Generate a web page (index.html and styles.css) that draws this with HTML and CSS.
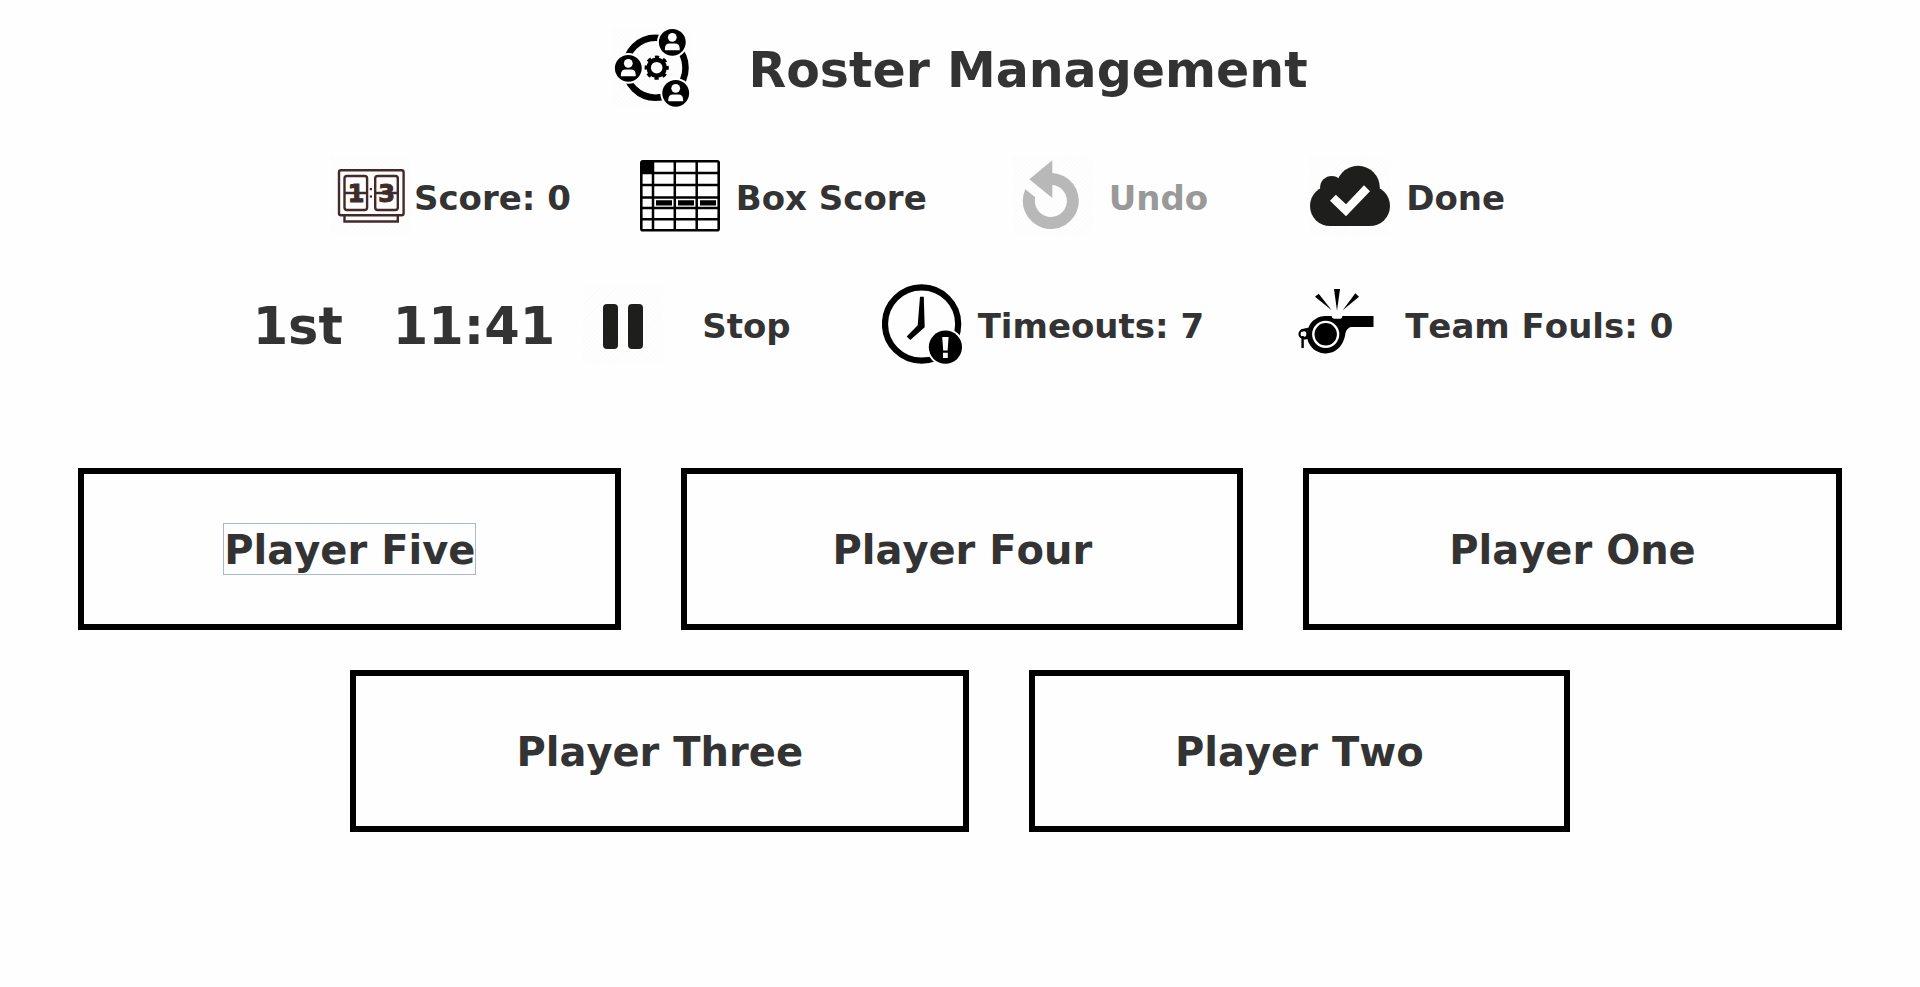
FILE: index.html
```html
<!DOCTYPE html>
<html lang="en">
<head>
<meta charset="utf-8">
<title>Roster Management</title>
<link rel="stylesheet" href="styles.css">
</head>
<body>
<main class="page">
  <header class="controls">
    <h1 class="row heading">
      <svg class="icon hatched" viewBox="0 0 80 80" aria-hidden="true">
        <circle cx="43.5" cy="39.7" r="30" fill="none" stroke="#000" stroke-width="6.5"/>
        <g fill="none" stroke="#000">
          <circle cx="44.7" cy="39.7" r="8" stroke-width="4.4"/>
          <circle cx="44.7" cy="39.7" r="10.6" stroke-width="3" stroke-dasharray="4.2 4.125" stroke-dashoffset="2.1"/>
        </g>
        <g id="member" transform="translate(60.3 14.3)">
          <circle r="15.4" fill="#fff"/><circle r="13.4"/>
          <circle cy="-5" r="4.4" fill="#fff"/>
          <path d="M-7.4 8V6.5Q-7.4 1.2-2.6 1.2H2.6Q7.4 1.2 7.4 6.5V8Z" fill="#fff"/>
        </g>
        <use href="#member" x="-44" y="26"/>
        <use href="#member" x="3.4" y="51"/>
      </svg>
      <span>Roster Management</span>
    </h1>

    <div class="row actions">
      <button class="action tight" type="button">
        <svg class="icon hatched" viewBox="0 0 80 80" aria-hidden="true">
          <g fill="none" stroke="#432a2a" stroke-width="2.4">
            <rect x="8" y="14.3" width="64.6" height="45" rx="2"/>
            <rect x="13.5" y="20" width="22.6" height="34" rx="2.5"/>
            <rect x="44.2" y="20" width="22.6" height="34" rx="2.5"/>
            <path d="M13.5 60v5.5h53.3V60M13.5 37h22.6M44.2 37h22.6"/>
          </g>
          <g fill="#432a2a">
            <rect x="38.8" y="32" width="2.2" height="2.2"/><rect x="38.8" y="39.4" width="2.2" height="2.2"/>
            <text class="digit" x="25" y="46" text-anchor="middle">1</text>
            <text class="digit" x="55.5" y="46" text-anchor="middle">3</text>
          </g>
        </svg>
        <span>Score: 0</span>
      </button>
      <button class="action box-score" type="button">
        <svg class="icon" viewBox="0 0 80 80" aria-hidden="true">
          <rect x="1.3" y="5.3" width="77.4" height="69" rx="1.5" fill="#fff" stroke="#000" stroke-width="2.6"/>
          <path d="M1 5h13v13H1z"/>
          <path d="M13 5v69M34.8 5v69M56.7 5v69M1 17h78M1 29h78M1 41.5h78M1 52h78M1 63.3h78" fill="none" stroke="#000" stroke-width="2.5"/>
          <path d="M16 44.2h16v5.2H16zM38 44.2h16v5.2H38zM60 44.2h16v5.2H60z"/>
        </svg>
        <span>Box Score</span>
      </button>
      <button class="action undo" type="button" disabled>
        <svg class="icon hatched" viewBox="0 0 80 80" aria-hidden="true">
          <path fill="#b8b8b8" d="M39.3 17A28 28 0 1 1 12.3 33.3L22.3 41.3A16 16 0 1 0 39.3 29ZM39.3 4.3V42L16.3 23.3Z"/>
        </svg>
        <span>Undo</span>
      </button>
      <button class="action done" type="button">
        <svg class="icon hatched" viewBox="0 0 80 80" aria-hidden="true">
          <g fill="#1e1e1c">
            <circle cx="48" cy="31.6" r="21.8"/><circle cx="21.7" cy="31.5" r="11.6"/>
            <circle cx="20" cy="50" r="20"/><circle cx="60" cy="50" r="20"/>
            <path d="M20 30h40v40H20z"/>
          </g>
          <path fill="#fff" d="M20 44.7 25.8 38.8 36 48.2 54 29.3 60 35.3 36 60.3Z"/>
        </svg>
        <span>Done</span>
      </button>
    </div>

    <div class="row game">
      <span class="clock">1st</span>
      <span class="clock time">11:41</span>
      <button class="action stop" type="button">
        <svg class="icon hatched" viewBox="0 0 80 80" aria-hidden="true">
          <g fill="#1e1e1c"><rect x="20" y="20" width="15" height="45" rx="4"/><rect x="45" y="20" width="15" height="45" rx="4"/></g>
        </svg>
        <span>Stop</span>
      </button>
      <button class="action timeouts" type="button">
        <svg class="icon" viewBox="0 0 80 80" aria-hidden="true">
          <circle cx="39.6" cy="40" r="36.6" fill="none" stroke="#000" stroke-width="6.2"/>
          <path d="M38 12.7h3.8l.9 30.6L28.3 56l-3.6-3.4 11-11.3Z"/>
          <circle cx="63.4" cy="63.2" r="18.6" fill="#fff"/><circle cx="63.4" cy="63.2" r="16.6"/>
          <path fill="#fff" d="M60.2 53h6.4l-1 13.6h-4.4ZM61 68.8h4.8v5.2H61z"/>
        </svg>
        <span>Timeouts: 7</span>
      </button>
      <button class="action fouls" type="button">
        <svg class="icon" viewBox="0 0 80 80" aria-hidden="true">
          <path d="M27.7 32H33.7Q34 34.8 36.5 34.8H42Q44.3 34.8 44.3 32H75.5V43H54Q49.5 43 47.6 48.5 46.6 56 43.5 60.5A18.7 18.7 0 1 1 27.7 32Z"/>
          <circle cx="27.7" cy="50.3" r="12.4" fill="none" stroke="#fff" stroke-width="2.4"/>
          <path d="M36 5h6l-3 21.7ZM17 12.7l3.7-3 13 16.6ZM57.3 9.3l3.7 3.4-16.3 13.6Z"/>
          <circle cx="5.5" cy="50" r="4" fill="none" stroke="#000" stroke-width="2.2"/>
          <path d="M3.5 46.5 10 45M6 54.5l4-1M4.6 52v12" fill="none" stroke="#000" stroke-width="2.4"/>
        </svg>
        <span>Team Fouls: 0</span>
      </button>
    </div>
  </header>

  <section class="players" aria-label="Players on court">
    <div class="player-row">
      <button class="player" type="button"><span class="name focused">Player Five</span></button>
      <button class="player wide" type="button"><span class="name">Player Four</span></button>
      <button class="player" type="button"><span class="name">Player One</span></button>
    </div>
    <div class="player-row">
      <button class="player widest" type="button"><span class="name">Player Three</span></button>
      <button class="player" type="button"><span class="name">Player Two</span></button>
    </div>
  </section>
</main>
</body>
</html>
```
FILE: styles.css
```css
* { box-sizing: border-box; }

body {
  margin: 0;
  background: #fefefe;
  color: #333;
  font-family: "DejaVu Sans", Verdana, sans-serif;
  font-weight: bold;
  font-kerning: none;
}

button {
  padding: 0;
  border: 0;
  background: none;
  color: inherit;
  font: inherit;
  font-kerning: none;
}

.page { padding: 28px 0; }

.controls {
  display: flex;
  flex-direction: column;
  gap: 48px;
}

.row {
  display: flex;
  align-items: center;
  justify-content: center;
  white-space: nowrap;
}

.row span { padding-top: 3px; }

.heading {
  gap: 56px;
  margin: 0;
  font-size: 49px;
}

.row.heading span,
.row .clock { padding-top: 5px; }

.icon {
  flex: none;
  width: 80px;
  height: 80px;
}

.hatched {
  background: repeating-linear-gradient(135deg, #fefefe 0 2px, #fbfbfb 2px 3px);
}

.digit {
  font-size: 24px;
  font-weight: bold;
  stroke: #432a2a;
  stroke-width: 1px;
}

.action {
  display: flex;
  align-items: center;
  gap: 16px;
  font-size: 34px;
}

.action:disabled { color: #999; }

.tight { gap: 3px; }

.actions { padding-right: 84px; }
.box-score { margin-left: 69px; }
.undo { margin-left: 86px; }
.done { margin-left: 102px; }

.game { padding-left: 6px; }
.clock { font-size: 51px; }
.time { margin-left: 50px; }
.stop { gap: 39px; margin-left: 28px; }
.timeouts { margin-left: 91px; }
.fouls { gap: 27px; margin-left: 94px; }

.players {
  display: flex;
  flex-direction: column;
  gap: 40px;
  padding-top: 104px;
}

.player-row {
  display: flex;
  justify-content: center;
  gap: 60px;
}

.player {
  padding: 50px 140px;
  border: 6px solid #000;
  font-size: 40px;
  line-height: 47px;
  white-space: nowrap;
}

.wide { padding-inline: 145px; }
.widest { padding-inline: 160px; }

.name {
  display: block;
  padding-top: 3px;
}

.focused { outline: 1px solid #a9b8cc; }
```
